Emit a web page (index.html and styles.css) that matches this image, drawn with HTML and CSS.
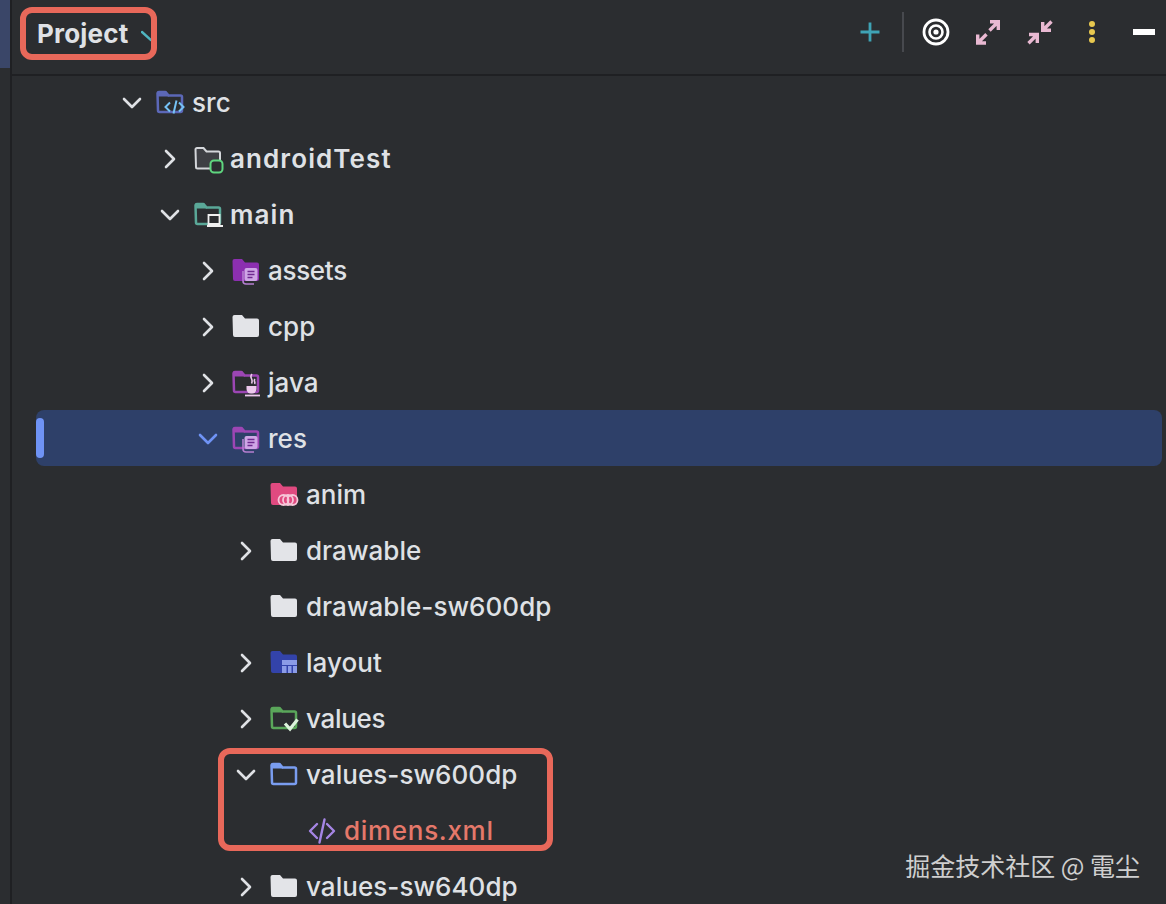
FILE: index.html
```html
<!DOCTYPE html>
<html lang="en">
<head>
<meta charset="utf-8">
<title>Project</title>
<link rel="stylesheet" href="styles.css">
</head>
<body>
<svg class="defs" width="0" height="0" aria-hidden="true">
  <defs>
    <symbol id="right" viewBox="0 0 24 24"><path d="M8 4l8 8-8 8" fill="none" stroke="currentColor" stroke-width="2.6" stroke-linecap="round" stroke-linejoin="round"/></symbol>
    <symbol id="down" viewBox="0 0 24 24"><path d="M4 8l8 8 8-8" fill="none" stroke="currentColor" stroke-width="2.6" stroke-linecap="round" stroke-linejoin="round"/></symbol>
    <symbol id="solid" viewBox="0 0 28 28"><path d="M.5 4a2 2 0 0 1 2-2h7.5l3 3.5h12a2 2 0 0 1 2 2V22a2 2 0 0 1-2 2h-22a2 2 0 0 1-2-2z" fill="currentColor"/></symbol>
    <symbol id="outline" viewBox="0 0 28 28"><path d="M1.500 4.500a1.500 1.500 0 0 1 1.500-1.500h6.500l3 3.500h12a1.500 1.500 0 0 1 1.500 1.500V21.500a1.500 1.500 0 0 1-1.500 1.500h-21a1.500 1.500 0 0 1-1.500-1.500z" fill="none" stroke="currentColor" stroke-width="2.500" stroke-linejoin="round"/><path d="M1 4a2 2 0 0 1 2-2h7l3 3.500v2H1z" fill="currentColor"/></symbol>
    <symbol id="doc" viewBox="0 0 28 28"><path d="M12.500 13a2 2 0 0 1 2-2h9a2 2 0 0 1 2 2v9a2 2 0 0 1-2 2h-9a2 2 0 0 1-2-2z" fill="#cfa6e6"/><path d="M15.500 14.500h7M15.500 17.500h7M15.500 20.500h5" stroke="#6f2a90" stroke-width="1.400"/><path d="M11 14v10a3 3 0 0 0 3 3h8" fill="none" stroke="#b57ed0" stroke-width="1.600"/></symbol>
  </defs>
</svg>
<div class="window">
  <div class="stripe"></div>
  <main class="panel">
    <header class="toolbar">
      <div class="title">Project<svg class="title-arrow" width="14" height="14" viewBox="0 0 14 14"><path d="M1 2l9 8" fill="none" stroke="#4fb5c0" stroke-width="2.400" stroke-linecap="round"/></svg></div>
      <div class="actions">
        <svg class="tool" viewBox="0 0 28 28"><path d="M14 4.500v19M4.500 14h19" stroke="#3fa3b5" stroke-width="2.800"/></svg>
        <span class="sep"></span>
        <div class="tools">
          <svg class="tool" viewBox="0 0 28 28"><circle cx="14" cy="14" r="12" fill="none" stroke="#fff" stroke-width="2.800"/><circle cx="14" cy="14" r="6.500" fill="none" stroke="#fff" stroke-width="2.600"/><circle cx="14" cy="14" r="2.600" fill="#fff"/></svg>
          <svg class="tool" viewBox="0 0 28 28"><path d="M16 3.700h8.300V12M23.500 4.500L15.500 12.500M12 25H3.700V16.500M4.500 24.200L12.500 16.200" fill="none" stroke="#e9b9d2" stroke-width="3.400"/></svg>
          <svg class="tool" viewBox="0 0 28 28"><path d="M16.700 4v8.300H25M17.500 11.500L25.500 3.500M3 16.500H11.300V25M10.500 17.300L2.500 25.300" fill="none" stroke="#e9b9d2" stroke-width="3.400"/></svg>
          <svg class="tool" viewBox="0 0 28 28"><circle cx="14" cy="6" r="3" fill="#e8c84f"/><circle cx="14" cy="14" r="3" fill="#e8c84f"/><circle cx="14" cy="22" r="3" fill="#e8c84f"/></svg>
          <svg class="tool" viewBox="0 0 28 28"><rect x="3" y="11" width="22" height="6" fill="#fff"/></svg>
        </div>
      </div>
    </header>
    <div class="tree">
      <div class="row d0">
        <svg class="chev"><use href="#down"/></svg>
        <svg class="icon src"><use href="#outline"/><path d="M14 13.500l-4.500 4.500 4.500 4.500M23 13.500l4.500 4.500-4.500 4.500M20.500 11.500l-3 13" fill="none" stroke="#75c2f5" stroke-width="2"/></svg>
        <span class="label">src</span>
      </div>
      <div class="row d1">
        <svg class="chev"><use href="#right"/></svg>
        <svg class="icon"><path d="M1.500 4.500a1.500 1.500 0 0 1 1.500-1.500h6.500l3 3.500h12a1.500 1.500 0 0 1 1.500 1.500V22a1.500 1.500 0 0 1-1.500 1.500h-21a1.500 1.500 0 0 1-1.500-1.500z" fill="#3e3f44" stroke="#d4d6da" stroke-width="2"/><rect x="16.500" y="15.500" width="12" height="12" rx="3.500" fill="#2b2d30" stroke="#5fd67f" stroke-width="2"/></svg>
        <span class="label strong">androidTest</span>
      </div>
      <div class="row d1">
        <svg class="chev"><use href="#down"/></svg>
        <svg class="icon main-f"><use href="#outline"/><path d="M14.500 14h11v9h-11z" fill="#2b2d30" stroke="#f0f0f0" stroke-width="1.800"/><path d="M13 25h16" stroke="#f0f0f0" stroke-width="2"/></svg>
        <span class="label strong">main</span>
      </div>
      <div class="row d2">
        <svg class="chev"><use href="#right"/></svg>
        <svg class="icon assets"><use href="#solid"/><use href="#doc"/></svg>
        <span class="label tight">assets</span>
      </div>
      <div class="row d2">
        <svg class="chev"><use href="#right"/></svg>
        <svg class="icon plain"><use href="#solid"/></svg>
        <span class="label">cpp</span>
      </div>
      <div class="row d2">
        <svg class="chev"><use href="#right"/></svg>
        <svg class="icon java"><use href="#outline"/><path d="M20 5c-3.500 3.500 2 5-.5 9.500M23 10c-2 2 1 3-.5 5" fill="none" stroke="#ecc9ec" stroke-width="1.600"/><path d="M14.500 17h10v3a4.500 4.500 0 0 1-4.500 4.500h-1a4.500 4.500 0 0 1-4.500-4.500z" fill="#ecc9ec"/><path d="M13 26.500h15" stroke="#ecc9ec" stroke-width="1.800"/></svg>
        <span class="label">java</span>
      </div>
      <div class="row d2 selected">
        <svg class="chev"><use href="#down"/></svg>
        <svg class="icon java"><use href="#outline"/><use href="#doc"/></svg>
        <span class="label">res</span>
      </div>
      <div class="row d3 leaf">
        <svg class="icon anim"><use href="#solid"/><g fill="none" stroke="#f6c6d8" stroke-width="1.800"><circle cx="13.500" cy="19" r="5"/><circle cx="18" cy="19" r="5"/><circle cx="22.500" cy="19" r="5"/></g></svg>
        <span class="label">anim</span>
      </div>
      <div class="row d3">
        <svg class="chev"><use href="#right"/></svg>
        <svg class="icon plain"><use href="#solid"/></svg>
        <span class="label">drawable</span>
      </div>
      <div class="row d3 leaf">
        <svg class="icon plain"><use href="#solid"/></svg>
        <span class="label">drawable-sw600dp</span>
      </div>
      <div class="row d3">
        <svg class="chev"><use href="#right"/></svg>
        <svg class="icon layout"><use href="#solid"/><path d="M12 11h15v5H12zM12 17h4.500v7H12zM18 17h3.500v7H18zM23 17h4v7h-4z" fill="#8b9be6"/></svg>
        <span class="label">layout</span>
      </div>
      <div class="row d3">
        <svg class="chev"><use href="#right"/></svg>
        <svg class="icon vals"><use href="#outline"/><path d="M15 18.500l5 5.500 7.500-9.500" fill="none" stroke="#dcf3dc" stroke-width="3.200"/></svg>
        <span class="label tight">values</span>
      </div>
      <div class="marked">
        <div class="row d3">
          <svg class="chev"><use href="#down"/></svg>
          <svg class="icon blue"><use href="#outline"/></svg>
          <span class="label">values-sw600dp</span>
        </div>
        <div class="row d4 leaf">
          <svg class="icon xml" viewBox="0 0 28 28"><path d="M9 7l-7 7 7 7M19 7l7 7-7 7M16.500 2.500l-5 23" fill="none" stroke="#a585e4" stroke-width="2.400" stroke-linecap="round" stroke-linejoin="round"/></svg>
          <span class="label changed">dimens.xml</span>
        </div>
      </div>
      <div class="row d3">
        <svg class="chev"><use href="#right"/></svg>
        <svg class="icon plain"><use href="#solid"/></svg>
        <span class="label">values-sw640dp</span>
      </div>
    </div>
  </main>
  <div class="watermark">掘金技术社区 @ 電尘</div>
</div>
</body>
</html>
```

FILE: styles.css
```css
* { box-sizing: border-box; }
html, body { margin: 0; height: 100%; }
body {
  background: #2b2d30;
  font-family: Inter, "Noto Sans", sans-serif;
  overflow: hidden;
}
.defs { position: absolute; }
.window {
  position: relative;
  display: flex;
  height: 904px;
  overflow: hidden;
}
.stripe {
  flex: 0 0 12px;
  border-right: 2px solid #1f2023;
  background: linear-gradient(#3a4668 68px, #2b2d30 68px);
}
.panel { flex: 1; min-width: 0; }
.toolbar {
  display: flex;
  align-items: center;
  justify-content: space-between;
  height: 76px;
  padding: 0 8px 7px 8px;
  border-bottom: 2px solid #1f2023;
}
.title {
  display: flex;
  align-items: center;
  width: 137px;
  height: 53px;
  padding-left: 11px;
  border: 6px solid #e8685a;
  border-radius: 12px;
  color: #dfe1e5;
  font-size: 26px;
  font-weight: 700;
  letter-spacing: .2px;
  overflow: hidden;
}
.title-arrow { margin: 6px -6px 0 12px; flex: none; }
.actions { display: flex; align-items: center; margin-bottom: 3px; }
.tools { display: flex; align-items: center; gap: 24px; }
.tool { width: 28px; height: 28px; display: block; }
.sep { width: 2px; height: 40px; margin: 0 18px; background: #47494e; }

.tree { margin-top: -2px; padding: 0 4px 0 24px; }
.row {
  display: flex;
  align-items: center;
  height: 56px;
  padding-top: 2px;
  color: #dfe1e5;
  font-size: 26px;
  line-height: 1;
}
.d0 { padding-left: 84px; }
.d1 { padding-left: 122px; }
.d2 { padding-left: 160px; }
.d3 { padding-left: 198px; }
.d4 { padding-left: 236px; }
.leaf { padding-left: 234px; }
.d4.leaf { padding-left: 272px; }
.chev {
  flex: none;
  width: 24px;
  height: 24px;
  margin-right: 12px;
  color: #dfe1e5;
}
.icon { flex: none; width: 28px; height: 28px; margin-right: 8px; overflow: visible; }
.label { white-space: nowrap; font-weight: 500; letter-spacing: .05px; }
.label.strong { font-weight: 600; letter-spacing: 1.1px; }
.label.tight { letter-spacing: -.3px; }
.label.changed { color: #e5786a; letter-spacing: .7px; }

.selected {
  position: relative;
  border-radius: 8px;
  background: #2e4069;
}
.selected::before {
  content: "";
  position: absolute;
  left: 0;
  top: 8px;
  width: 8px;
  height: 40px;
  border-radius: 4px;
  background: #6f93f5;
}
.selected .chev { color: #6f93f5; }

.src { color: #5c68b8; }
.main-f { color: #5aa898; }
.assets { color: #8c2fb0; }
.plain { color: #e3e4e8; }
.java { color: #9c46b4; }
.anim { color: #e04a80; }
.layout { color: #3343aa; }
.vals { color: #5aa65a; }
.blue { color: #7a9df0; }

.marked { position: relative; }
.marked::after {
  content: "";
  position: absolute;
  box-sizing: border-box;
  left: 182px;
  top: 2px;
  width: 335px;
  height: 103px;
  border: 6px solid #e8685a;
  border-radius: 12px;
  pointer-events: none;
}
.watermark {
  position: absolute;
  right: 26px;
  top: 848px;
  color: #cfcfcf;
  font-family: "Noto Sans CJK SC", "Noto Sans", sans-serif;
  font-size: 25px;
  line-height: 34px;
  white-space: nowrap;
}
```
